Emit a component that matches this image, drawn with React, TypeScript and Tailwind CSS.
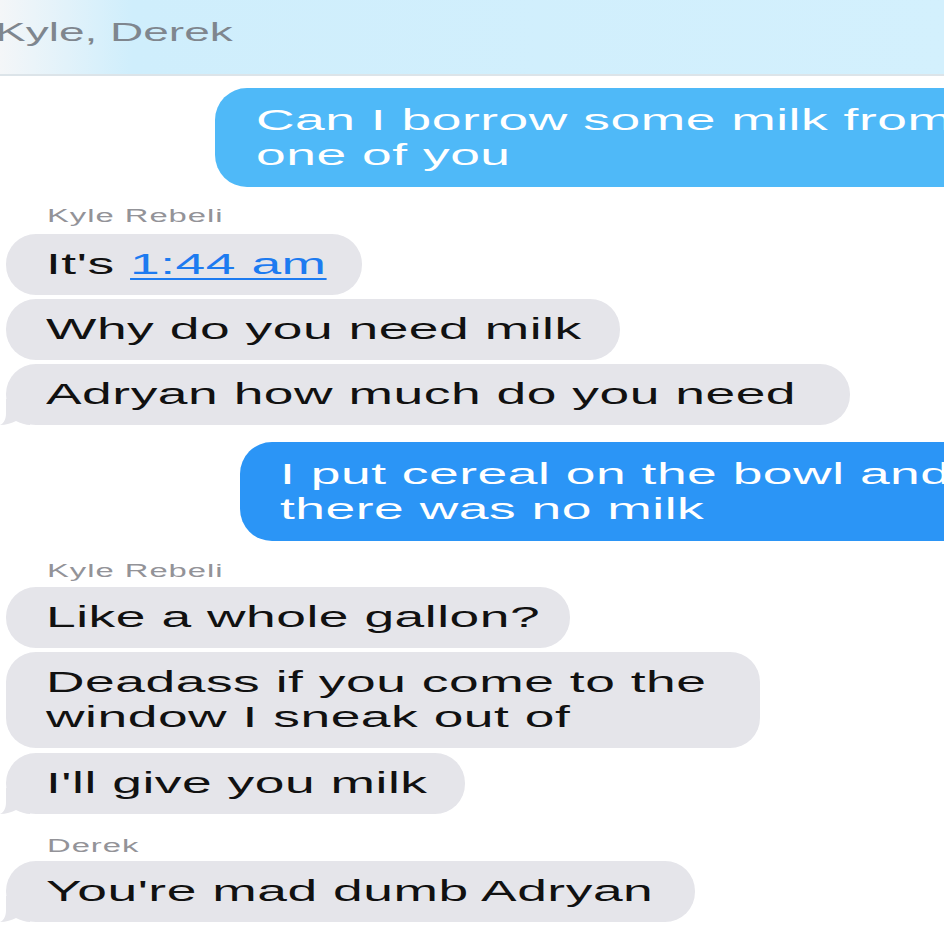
import React from 'react';

interface IBubble {
  width: string,
  top: string,
  tail?: boolean,
  children: React.ReactNode,
}

const Tail: React.FC = () => (
  <svg className="absolute left-[-6px] bottom-0" width="30" height="26" viewBox="0 0 30 26">
    <path d="M6 0 L6 14 C6 20 4 24 0 26 C6 26 12 24 16 22 C20 24 26 26 30 26 L30 0 Z" fill="#e5e5ea" />
  </svg>
);

const GrayBubble: React.FC<IBubble> = ({ width, top, tail, children }) => (
  <div className={`relative ml-[6px] rounded-[30px] bg-[#e5e5ea] py-[13px] pl-[40px] ${width} ${top}`}>
    {tail && <Tail />}
    <p className="relative origin-left scale-x-[1.84] whitespace-nowrap text-[29px] leading-[35px] tracking-[0.01em] text-[#111]">
      {children}
    </p>
  </div>
);

const Sender: React.FC<{ name: string, top: string }> = ({ name, top }) => (
  <div className={`pl-[47px] h-[22px] ${top}`}>
    <p className="origin-left scale-x-[1.82] whitespace-nowrap text-[18px] leading-[22px] tracking-[0.03em] text-[#939398]">
      {name}
    </p>
  </div>
);

const App: React.FC = () => {
  return (
    <div className="w-[944px] h-[938px] overflow-hidden bg-white font-['Liberation_Sans',Arial,sans-serif]">
      <div className="h-[76px] border-b-2 border-[#dce4e9] bg-linear-to-r from-[#f4f6f8] via-[#cfeefc] via-[14%] to-[#d3f0fd] pt-[17px]">
        <p className="ml-[-5px] origin-left scale-x-[1.84] whitespace-nowrap text-[25px] leading-[30px] text-[#7f868e]">
          Kyle, Derek
        </p>
      </div>

      <div className="flex flex-col">
        <div className="ml-[215px] mt-[12px] w-[780px] rounded-[32px] bg-[#4fb9f8] pt-[15px] pb-[14px] pl-[41px]">
          <p className="origin-left scale-x-[1.84] whitespace-nowrap text-[29px] leading-[35px] tracking-[0.01em] text-white">
            Can I borrow some milk from<br />one of you
          </p>
        </div>

        <Sender name="Kyle Rebeli" top="mt-[18px]" />
        <GrayBubble width="w-[356px]" top="mt-[7px]">
          It's <span className="text-[#1d7bf0] underline decoration-2 underline-offset-4">1:44 am</span>
        </GrayBubble>
        <GrayBubble width="w-[614px]" top="mt-[4px]">Why do you need milk</GrayBubble>
        <GrayBubble width="w-[844px]" top="mt-[4px]" tail>Adryan how much do you need</GrayBubble>

        <div className="ml-[240px] mt-[17px] w-[760px] rounded-[32px] bg-[#2b95f6] pt-[15px] pb-[14px] pl-[40px]">
          <p className="origin-left scale-x-[1.84] whitespace-nowrap text-[29px] leading-[35px] tracking-[0.01em] text-white">
            I put cereal on the bowl and<br />there was no milk
          </p>
        </div>

        <Sender name="Kyle Rebeli" top="mt-[19px]" />
        <GrayBubble width="w-[564px]" top="mt-[5px]">Like a whole gallon?</GrayBubble>
        <GrayBubble width="w-[754px]" top="mt-[4px]">
          Deadass if you come to the<br />window I sneak out of
        </GrayBubble>
        <GrayBubble width="w-[459px]" top="mt-[5px]" tail>I'll give you milk</GrayBubble>

        <Sender name="Derek" top="mt-[21px]" />
        <GrayBubble width="w-[689px]" top="mt-[4px]" tail>You're mad dumb Adryan</GrayBubble>
      </div>
    </div>
  );
}

export default App;
